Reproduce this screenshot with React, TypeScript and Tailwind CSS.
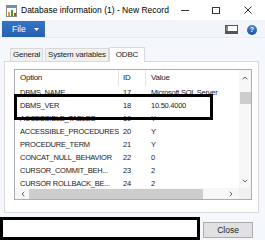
import { ChevronUp, ChevronDown, ChevronLeft, ChevronRight } from "lucide-react";

const rows: [string, string, string][] = [
  ["DBMS_NAME", "17", "Microsoft SQL Server"],
  ["DBMS_VER", "18", "10.50.4000"],
  ["ACCESSIBLE_TABLES", "19", "Y"],
  ["ACCESSIBLE_PROCEDURES", "20", "Y"],
  ["PROCEDURE_TERM", "21", "Y"],
  ["CONCAT_NULL_BEHAVIOR", "22", "0"],
  ["CURSOR_COMMIT_BEH...", "23", "2"],
  ["CURSOR ROLLBACK_BE...", "24", "2"],
];

const AppIcon = () => (
  <svg width="11" height="12" viewBox="0 0 11 12">
    <rect x="0.5" y="0.5" width="10" height="11" fill="#fff" stroke="#8a8a8a" />
    <rect x="1" y="1" width="9" height="2" fill="#6d8fb8" />
    <rect x="2" y="7" width="2" height="4" fill="#e0a21b" />
    <rect x="5" y="5" width="2" height="6" fill="#4a9a3a" />
    <rect x="8" y="8" width="2" height="3" fill="#d23b2b" />
  </svg>
);

export default function App() {
  return (
    <div
      className="w-[265px] h-[240px] bg-[#f4f7fb] flex flex-col overflow-hidden relative text-[#1b1b1b]"
      style={{ fontFamily: '"Liberation Sans", Arial, sans-serif' }}
    >
      {/* TITLE BAR */}
      <div className="h-[20px] bg-white flex items-center shrink-0">
        <div className="ml-[6px] mt-[1px]">
          <AppIcon />
        </div>
        <span className="ml-[4px] text-[8.5px] text-black">Database information (1) - New Record</span>
        <div className="ml-auto flex items-center">
          <div className="w-[8px] h-px bg-[#333] mr-[23px]" />
          <div className="w-[8px] h-[7px] border border-[#333] mr-[24px]" />
          <svg width="8" height="8" viewBox="0 0 8 8" className="mr-[13px]">
            <path d="M0.5 0.5 L7.5 7.5 M7.5 0.5 L0.5 7.5" stroke="#333" strokeWidth="1" />
          </svg>
        </div>
      </div>

      {/* RIBBON */}
      <div className="h-[18px] flex items-end shrink-0 bg-[#f2f6fb] border-b border-[#e6ecf3]">
        <div className="ml-[2px] w-[43px] h-[16px] bg-gradient-to-b from-[#3474c8] to-[#2860b0] flex items-center text-white text-[8.5px]">
          <span className="ml-[10px]">File</span>
          <svg width="5" height="3" viewBox="0 0 5 3" className="ml-[8px]">
            <path d="M0 0 L5 0 L2.5 3 Z" fill="#fff" />
          </svg>
        </div>
        <div className="ml-auto flex items-center self-center gap-[9px] mr-[8px] mt-[2px]">
          <svg width="13" height="9" viewBox="0 0 13 9">
            <rect x="0.5" y="0.5" width="12" height="8" fill="#fff" stroke="#555" />
            <rect x="1" y="6" width="11" height="2.5" fill="#555" />
            <rect x="1" y="1" width="2" height="5" fill="#888" />
          </svg>
          <div className="w-[10px] h-[10px] rounded-full bg-gradient-to-b from-[#4f86d6] to-[#1f4f9c] flex items-center justify-center text-white text-[7px] font-bold leading-none">
            ?
          </div>
        </div>
      </div>

      {/* CONTENT */}
      <div className="flex-1 flex flex-col px-[4px] pt-[8px]">
        <div className="flex items-end ml-[6px] h-[15px] text-[8px] tracking-[-0.2px]">
          <div className="h-[13px] px-[2px] bg-[#f0f0f0] border border-b-0 border-[#d9d9d9] flex items-center">General</div>
          <div className="h-[13px] px-[2px] ml-[2px] bg-[#f0f0f0] border border-b-0 border-[#d9d9d9] flex items-center">System variables</div>
          <div className="h-[15px] px-[6px] bg-white border border-b-0 border-[#d9d9d9] flex items-center -mb-px relative z-10">ODBC</div>
        </div>

        <div className="h-[152px] w-[255px] bg-white border border-[#d9d9d9] pt-[7px] pl-[9px] pr-[6px] pb-[12px]">
          <div className="h-full border border-[#abadb3] flex flex-col text-[7.5px] tracking-[-0.25px]">
            <div className="flex flex-1 min-h-0">
              <div className="flex-1 flex flex-col">
                <div className="h-[16px] flex shrink-0 text-[8px]">
                  <div className="w-[104px] pl-[5px] flex items-center border-r border-[#e5e5e5]">Option</div>
                  <div className="w-[27px] pl-[4px] flex items-center border-r border-[#e5e5e5]">ID</div>
                  <div className="flex-1 pl-[5px] flex items-center">Value</div>
                </div>
                <div className="flex-1 overflow-hidden">
                  {rows.map(([opt, id, val]) => (
                    <div key={id} className="h-[13px] flex items-center whitespace-nowrap">
                      <div className="w-[104px] pl-[5px] overflow-hidden">{opt}</div>
                      <div className="w-[27px] pl-[4px]">{id}</div>
                      <div className="flex-1 pl-[5px] overflow-hidden">{val}</div>
                    </div>
                  ))}
                </div>
              </div>
              {/* vertical scrollbar */}
              <div className="w-[12px] bg-[#f7f7f7] flex flex-col items-center">
                <ChevronUp size={8} strokeWidth={3} className="mt-[4px] text-[#606060]" />
                <div className="w-[11px] h-[12px] bg-[#cdcdcd] mt-[10px]" />
                <ChevronDown size={8} strokeWidth={3} className="mt-auto mb-[3px] text-[#606060]" />
              </div>
            </div>
            {/* horizontal scrollbar */}
            <div className="h-[11px] flex shrink-0">
              <div className="flex-1 bg-[#f7f7f7] flex items-center">
                <ChevronLeft size={8} strokeWidth={3} className="ml-[4px] text-[#606060]" />
                <div className="h-[10px] w-[174px] bg-[#cdcdcd] ml-[2px]" />
                <ChevronRight size={8} strokeWidth={3} className="ml-auto mr-[4px] text-[#606060]" />
              </div>
              <div className="w-[12px] bg-[#f0f0f0]" />
            </div>
          </div>
        </div>
      </div>

      {/* BOTTOM */}
      <div className="h-[23px] flex items-start shrink-0">
        <div className="w-[200px] h-[23px] bg-white border-[3px] border-black" />
        <div className="ml-[3px] mt-[5px] w-[50px] h-[16px] bg-[#e1e1e1] border border-[#adadad] flex items-center justify-center text-[8.5px]">
          Close
        </div>
      </div>

      {/* highlight annotation */}
      <div className="absolute left-[14px] top-[94px] w-[199px] h-[26px] border-[3px] border-black pointer-events-none" />
    </div>
  );
}
